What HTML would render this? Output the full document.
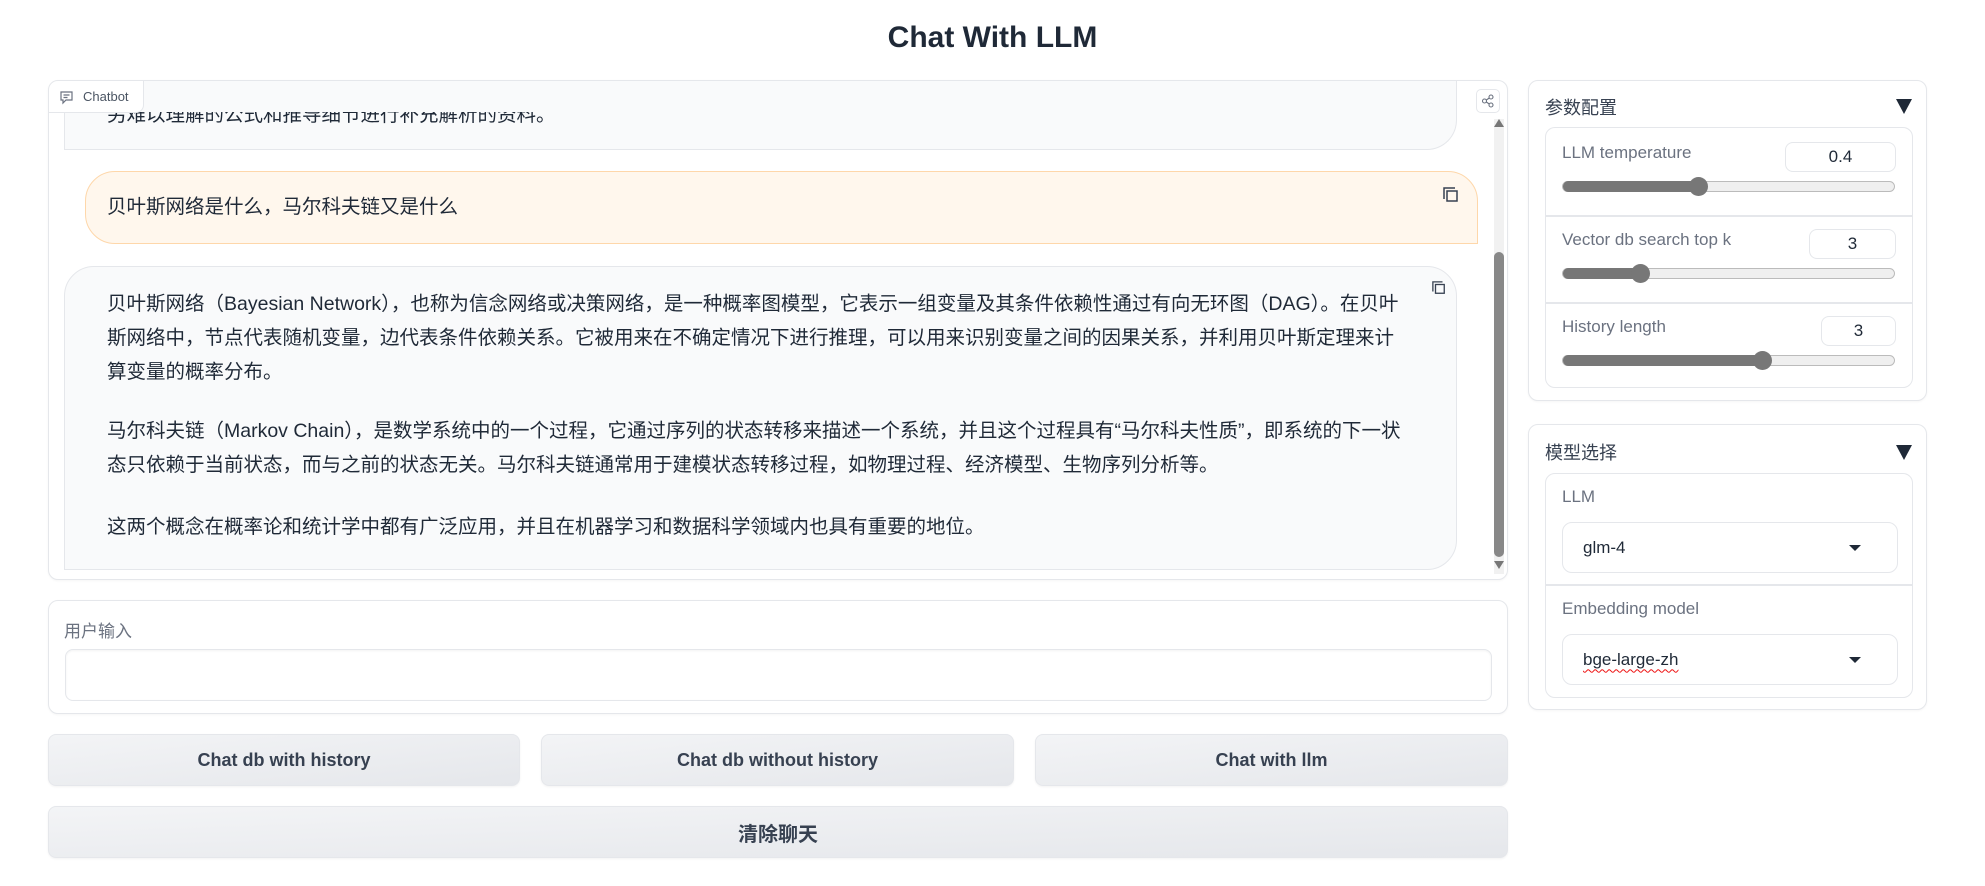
<!DOCTYPE html>
<html><head><meta charset="utf-8">
<style>
*{box-sizing:border-box;margin:0;padding:0}
body{width:1985px;height:886px;background:#fff;font-family:"Liberation Sans","Noto Sans CJK SC",sans-serif;color:#1f2937;position:relative;overflow:hidden}
.a{position:absolute}
.panel{position:absolute;border:1px solid #e5e7eb;border-radius:10px;background:#fff;box-shadow:0 1px 2px rgba(0,0,0,.04)}
.txt{font-size:19.5px;line-height:34px;color:#1f2937;white-space:nowrap}
.btn{position:absolute;border:1px solid #e5e7eb;border-radius:8px;background:linear-gradient(to bottom right,#f3f4f6,#e5e7eb);font-weight:bold;font-size:18px;color:#374151;display:flex;align-items:center;justify-content:center;box-shadow:0 1px 2px rgba(0,0,0,.05)}
.lbl{font-size:17px;color:#6b7280}
.num{position:absolute;border:1px solid #e5e7eb;border-radius:8px;background:#fff;font-size:17px;text-align:center;line-height:28px;color:#1f2937}
.track{position:absolute;height:11px;border-radius:6px;background:#efefef;border:1px solid #bbb}
.fill{position:absolute;left:0;top:-1px;height:11px;border-radius:6px;background:#777}
.thumb{position:absolute;top:-5px;width:19px;height:19px;border-radius:50%;background:#777}
.sel{position:absolute;border:1px solid #e5e7eb;border-radius:10px;background:#fff;font-size:17px;color:#1f2937;padding-left:20px;display:flex;align-items:center}
.caret{position:absolute;right:36px;top:50%;margin-top:-3px;width:0;height:0;border-left:6px solid transparent;border-right:6px solid transparent;border-top:6px solid #1f2937}
.tri{position:absolute;width:0;height:0;border-left:8px solid transparent;border-right:8px solid transparent;border-top:15px solid #1f2937}
.in{position:absolute;left:0;top:0;width:100%;height:100%;transform:translateX(8px)}
</style></head><body>
<div class="a" style="left:0;width:1985px;top:21px;text-align:center;font-size:30px;font-weight:bold;color:#1f2937">Chat With LLM</div>

<!-- chatbot -->
<div class="panel" style="left:48px;top:80px;width:1460px;height:500px;overflow:hidden">
  <div class="a" style="left:15px;top:-10px;width:1393px;height:79px;background:#f9fafb;border:1px solid #e5e7eb;border-top:none;border-radius:0 0 30px 0"></div>
  <div class="a txt" style="left:58px;top:17px;clip-path:inset(14px 0 0 0)">另难以理解的公式和推导细节进行补充解析的资料。</div>
  <div class="a" style="left:36px;top:90px;width:1393px;height:73px;background:#fff7ed;border:1px solid #fed7aa;border-radius:30px 30px 0 30px"></div>
  <div class="a txt" style="left:58px;top:109px">贝叶斯网络是什么，马尔科夫链又是什么</div>
  <svg class="a" style="left:1394px;top:106px" width="16" height="16" viewBox="0 0 16 16" fill="none" stroke="#374151" stroke-width="1.5"><path d="M1 12V1h11"/><rect x="4" y="4" width="10" height="10"/></svg>
  <div class="a" style="left:15px;top:185px;width:1393px;height:304px;background:#f9fafb;border:1px solid #e5e7eb;border-radius:30px 30px 30px 0"></div>
  <svg class="a" style="left:1383px;top:200px" width="14" height="14" viewBox="0 0 16 16" fill="none" stroke="#374151" stroke-width="1.5"><path d="M1 12V1h11"/><rect x="4" y="4" width="10" height="10"/></svg>
  <div class="a txt" style="left:58px;top:206px">贝叶斯网络（Bayesian Network），也称为信念网络或决策网络，是一种概率图模型，它表示一组变量及其条件依赖性通过有向无环图（DAG）。在贝叶<br>斯网络中，节点代表随机变量，边代表条件依赖关系。它被用来在不确定情况下进行推理，可以用来识别变量之间的因果关系，并利用贝叶斯定理来计<br>算变量的概率分布。</div>
  <div class="a txt" style="left:58px;top:333px">马尔科夫链（Markov Chain），是数学系统中的一个过程，它通过序列的状态转移来描述一个系统，并且这个过程具有“马尔科夫性质”，即系统的下一状<br>态只依赖于当前状态，而与之前的状态无关。马尔科夫链通常用于建模状态转移过程，如物理过程、经济模型、生物序列分析等。</div>
  <div class="a txt" style="left:58px;top:429px">这两个概念在概率论和统计学中都有广泛应用，并且在机器学习和数据科学领域内也具有重要的地位。</div>
  <!-- label -->
  <div class="a" style="left:-1px;top:-1px;width:96px;height:33px;background:#fff;border:1px solid #e5e7eb;border-radius:10px 0 8px 0;font-size:13px;color:#4b5563;display:flex;align-items:center;padding-left:34px">Chatbot</div>
  <svg class="a" style="left:11px;top:10px" width="13" height="14" viewBox="0 0 13 14" fill="none" stroke="#6b7280" stroke-width="1.2"><path d="M1 1h11v8H6l-3 3V9H1z"/><path d="M3.5 4h6M3.5 6.5h4"/></svg>
  <!-- share -->
  <div class="a" style="left:1427px;top:8px;width:24px;height:24px;border:1px solid #e5e7eb;border-radius:5px;background:#fff"></div>
  <svg class="a" style="left:1432px;top:13px" width="14" height="14" viewBox="0 0 14 14" fill="none" stroke="#6b7280" stroke-width="1.1"><circle cx="10" cy="3" r="2"/><circle cx="3.5" cy="7" r="2"/><circle cx="10" cy="11" r="2"/><path d="M5.3 6l3-2M5.3 8l3 2"/></svg>
  <!-- scrollbar -->
  <div class="a" style="left:1445px;top:38px;width:10px;height:455px;background:#f1f1f1"></div>
  <div class="tri" style="left:1445px;top:38px;border-left-width:5px;border-right-width:5px;border-top:none;border-bottom:8px solid #777"></div>
  <div class="a" style="left:1445px;top:171px;width:10px;height:305px;border-radius:5px;background:#888"></div>
  <div class="tri" style="left:1445px;top:480px;border-left-width:5px;border-right-width:5px;border-top:8px solid #777"></div>
</div>

<!-- input -->
<div class="panel" style="left:48px;top:600px;width:1460px;height:114px">
  <div class="a lbl" style="left:15px;top:16px">用户输入</div>
  <div class="a" style="left:16px;top:48px;width:1427px;height:52px;border:1px solid #e5e7eb;border-radius:8px;box-shadow:inset 0 1px 2px rgba(0,0,0,.05)"></div>
</div>

<div class="btn" style="left:48px;top:734px;width:472px;height:52px">Chat db with history</div>
<div class="btn" style="left:541px;top:734px;width:473px;height:52px">Chat db without history</div>
<div class="btn" style="left:1035px;top:734px;width:473px;height:52px">Chat with llm</div>
<div class="btn" style="left:48px;top:806px;width:1460px;height:52px;font-size:20px">清除聊天</div>

<!-- params -->
<div class="panel" style="left:1528px;top:80px;width:399px;height:321px"><div class="in">
  <div class="a" style="left:8px;top:13px;font-size:18px;color:#374151">参数配置</div>
  <div class="tri" style="left:359px;top:18px"></div>
  <div class="a" style="left:8px;top:46px;width:368px;height:261px;border:1px solid #e5e7eb;border-radius:10px"></div>
  <div class="a" style="left:9px;top:134px;width:366px;height:2px;background:#e5e7eb"></div>
  <div class="a" style="left:9px;top:221px;width:366px;height:2px;background:#e5e7eb"></div>

  <div class="a lbl" style="left:25px;top:62px">LLM temperature</div>
  <div class="num" style="left:248px;top:61px;width:111px;height:30px">0.4</div>
  <div class="track" style="left:25px;top:100px;width:333px"><div class="fill" style="width:140px"></div><div class="thumb" style="left:126px"></div></div>

  <div class="a lbl" style="left:25px;top:149px">Vector db search top k</div>
  <div class="num" style="left:272px;top:148px;width:87px;height:30px">3</div>
  <div class="track" style="left:25px;top:187px;width:333px"><div class="fill" style="width:82px"></div><div class="thumb" style="left:68px"></div></div>

  <div class="a lbl" style="left:25px;top:236px">History length</div>
  <div class="num" style="left:284px;top:235px;width:75px;height:30px">3</div>
  <div class="track" style="left:25px;top:274px;width:333px"><div class="fill" style="width:204px"></div><div class="thumb" style="left:190px"></div></div>
</div></div>

<!-- model -->
<div class="panel" style="left:1528px;top:424px;width:399px;height:286px"><div class="in">
  <div class="a" style="left:8px;top:14px;font-size:18px;color:#374151">模型选择</div>
  <div class="tri" style="left:359px;top:20px"></div>
  <div class="a" style="left:8px;top:48px;width:368px;height:225px;border:1px solid #e5e7eb;border-radius:10px"></div>
  <div class="a" style="left:9px;top:159px;width:366px;height:2px;background:#e5e7eb"></div>
  <div class="a lbl" style="left:25px;top:62px">LLM</div>
  <div class="sel" style="left:25px;top:97px;width:336px;height:51px">glm-4<div class="caret"></div></div>
  <div class="a lbl" style="left:25px;top:174px">Embedding model</div>
  <div class="sel" style="left:25px;top:209px;width:336px;height:51px"><span style="text-decoration:underline wavy #e11;text-underline-offset:4px;text-decoration-thickness:1px">bge-large-zh</span><div class="caret"></div></div>
</div></div>
</body></html>
